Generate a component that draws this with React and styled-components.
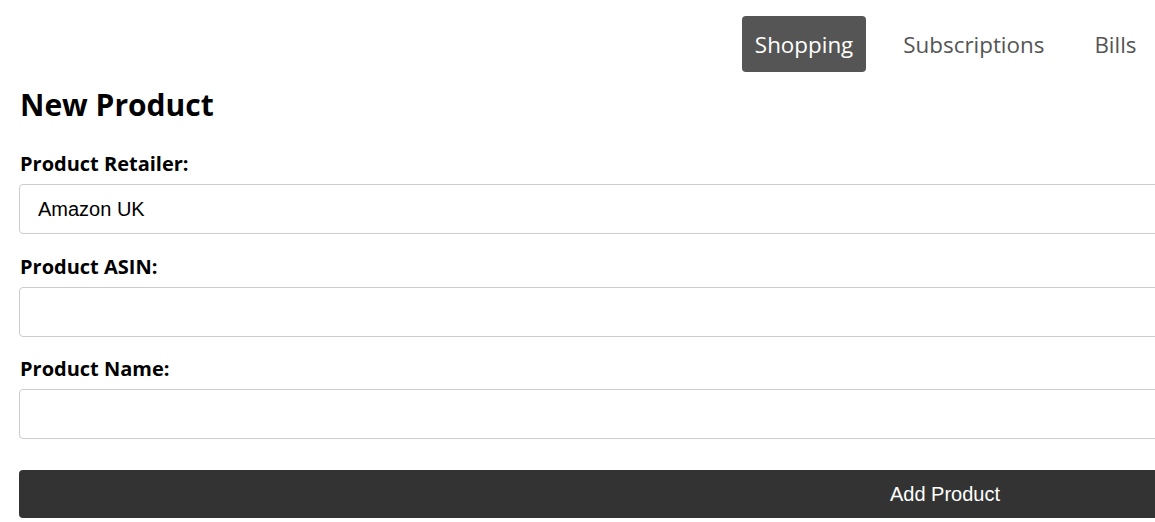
import React, { useState } from 'react'
import styled, { createGlobalStyle } from 'styled-components'

const GlobalStyle = createGlobalStyle`
html, body {
  margin: 0;
  padding: 0;
  background: #fff;
  overflow: hidden;
}
* { box-sizing: border-box; }
`

const Page = styled.div`
  padding: 16px 6px 0 19px;
  font-family: "Open Sans", sans-serif;
`

const TabBar = styled.nav`
  display: flex;
  justify-content: flex-end;
  gap: 25px;
`

const Tab = styled.button`
  height: 56px;
  padding: 0 12.5px;
  border: none;
  border-radius: 4px;
  font-family: "Open Sans", sans-serif;
  font-size: 22.4px;
  cursor: pointer;
  background: ${props => (props.active ? '#555555' : 'transparent')};
  color: ${props => (props.active ? '#ffffff' : '#555555')};
`

const Title = styled.h2`
  margin: 15px 0 28px 1px;
  font-size: 30px;
  line-height: 36px;
  font-weight: 700;
  color: #000;
`

const Form = styled.form`
  width: 1852px;
`

const Field = styled.div`
  margin-bottom: 19.5px;
`

const Label = styled.label`
  display: block;
  margin: 0 0 7px 1px;
  font-size: 20px;
  line-height: 26px;
  font-weight: 700;
  color: #000;
`

const Input = styled.input`
  display: block;
  width: 100%;
  height: 50px;
  padding: 0 18px;
  border: 1px solid #cccccc;
  border-radius: 4px;
  font-family: "Liberation Sans", Arial, sans-serif;
  font-size: 20px;
  color: #000;
  outline: none;
`

const Submit = styled.button`
  display: block;
  width: 100%;
  height: 48px;
  margin-top: 31px;
  border: none;
  border-radius: 4px;
  background: #333333;
  color: #fff;
  font-family: "Liberation Sans", Arial, sans-serif;
  font-size: 20px;
  cursor: pointer;
`

const tabs = ['Shopping', 'Subscriptions', 'Bills']

const App = () => {
  const [tab, setTab] = useState('Shopping')
  const [retailer, setRetailer] = useState('Amazon UK')
  const [asin, setAsin] = useState('')
  const [name, setName] = useState('')

  return (
    <Page>
      <GlobalStyle />
      <TabBar>
        {tabs.map(t => (
          <Tab key={t} active={tab === t} onClick={() => setTab(t)}>{t}</Tab>
        ))}
      </TabBar>
      <Title>New Product</Title>
      <Form onSubmit={e => e.preventDefault()}>
        <Field>
          <Label>Product Retailer:</Label>
          <Input value={retailer} onChange={e => setRetailer(e.target.value)} />
        </Field>
        <Field>
          <Label>Product ASIN:</Label>
          <Input value={asin} onChange={e => setAsin(e.target.value)} />
        </Field>
        <Field>
          <Label>Product Name:</Label>
          <Input value={name} onChange={e => setName(e.target.value)} />
        </Field>
        <Submit type="submit">Add Product</Submit>
      </Form>
    </Page>
  )
}

export default App
